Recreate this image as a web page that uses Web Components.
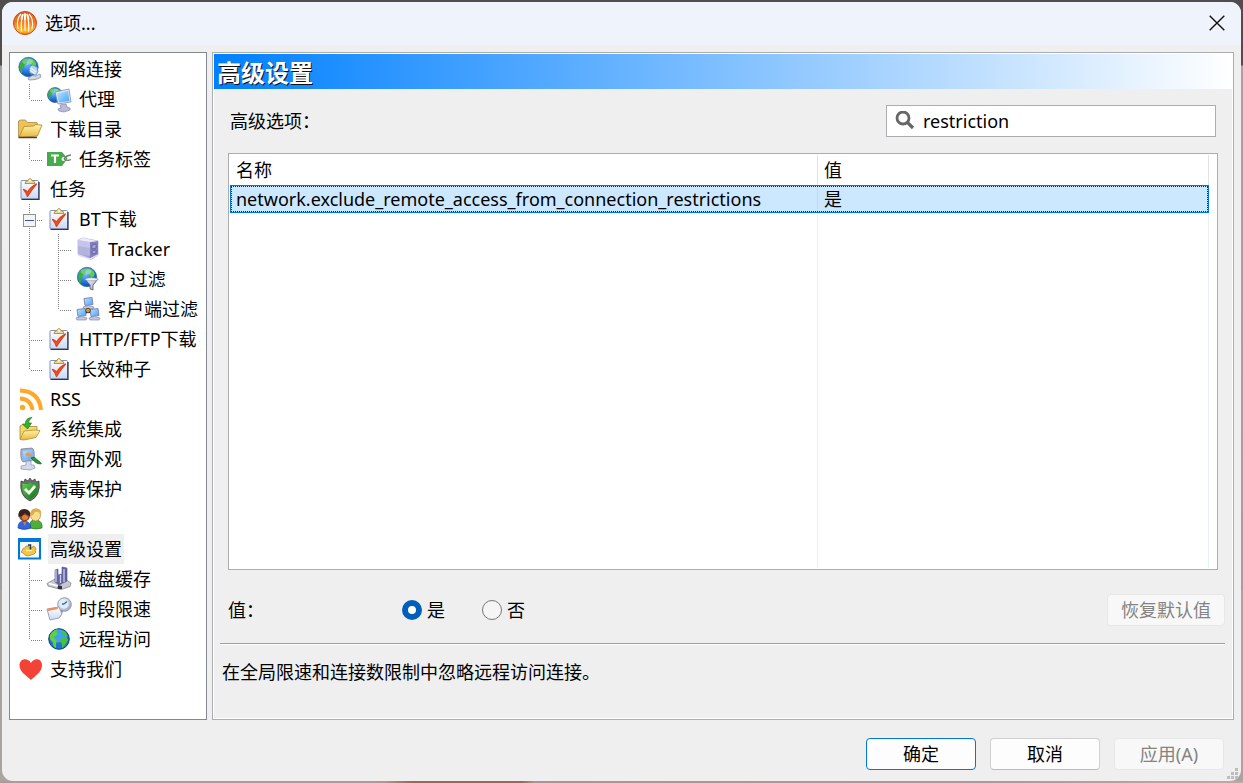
<!DOCTYPE html>
<html lang="zh-CN">
<head>
<meta charset="utf-8">
<title>选项</title>
<style>
  html, body { margin: 0; height: 100%; }
  body {
    box-sizing: border-box;
    padding: 2px;
    font: 18px/30px "Noto Sans", "Noto Sans CJK SC", sans-serif;
    color: #000;
    background:
      linear-gradient(90deg, #9f9f9f 30%, #a99a90 31%, #9a6a55 33%, #9a6a55 42%, #a09a96 43%, #9f9f9f 80%, #b5aea6) bottom / 100% 2px no-repeat,
      linear-gradient(#4f4d4d 65px, #a3a3a3 66px, #a0a0a0 590px, #aaa49e 592px);
  }
</style>
</head>
<body>
<options-window>
  <span slot="title">选项...</span>
  <options-tree slot="tree">
    <tree-item icon="globe-plug">网络连接</tree-item>
    <tree-item icon="globe-monitor" lines="l">代理</tree-item>
    <tree-item icon="folder">下载目录</tree-item>
    <tree-item icon="tag" lines="l">任务标签</tree-item>
    <tree-item icon="task">任务</tree-item>
    <tree-item icon="task" lines="x">BT下载</tree-item>
    <tree-item icon="server" lines="vt">Tracker</tree-item>
    <tree-item icon="globe-filter" lines="vt">IP 过滤</tree-item>
    <tree-item icon="network" lines="vl">客户端过滤</tree-item>
    <tree-item icon="task" lines="t">HTTP/FTP下载</tree-item>
    <tree-item icon="task" lines="l">长效种子</tree-item>
    <tree-item icon="rss">RSS</tree-item>
    <tree-item icon="folder-in">系统集成</tree-item>
    <tree-item icon="appearance">界面外观</tree-item>
    <tree-item icon="shield">病毒保护</tree-item>
    <tree-item icon="people">服务</tree-item>
    <tree-item icon="advanced" selected>高级设置</tree-item>
    <tree-item icon="disk" lines="t">磁盘缓存</tree-item>
    <tree-item icon="schedule" lines="t">时段限速</tree-item>
    <tree-item icon="earth" lines="l">远程访问</tree-item>
    <tree-item icon="heart">支持我们</tree-item>
  </options-tree>
  <options-page slot="page">
    <span slot="heading">高级设置</span>
    <value-row slot="value"></value-row>
    <span slot="description">在全局限速和连接数限制中忽略远程访问连接。</span>
  </options-page>
  <push-button slot="actions" kind="default">确定</push-button>
  <push-button slot="actions">取消</push-button>
  <push-button slot="actions" disabled>应用(A)</push-button>
</options-window>

<script>
const GLOBE = (cx, cy, r) => `
  <circle cx="${cx}" cy="${cy}" r="${r}" fill="url(#sea)" stroke="#1450a0" stroke-width=".6"/>
  <g transform="translate(${cx - r} ${cy - r}) scale(${r / 10})">
    <path d="M1.500 7C3 3 6 1 9 .7l1 2-2 2 1 2-3 1-1 3-2 1 1 3-1 2C1 14 .5 10 1.500 7z" fill="#3cb030"/>
    <path d="M11 1.500q5 0 7 5l-1 3-3 1-1-3-3-1 0-3z" fill="#5fd044"/>
    <path d="M13 13l4-1-2 5-3 2z" fill="#38a834"/>
    <ellipse cx="9" cy="4.500" rx="5.500" ry="3" fill="#fff" opacity=".3"/>
  </g>`;
const DEFS = `<defs>
  <radialGradient id="sea" cx=".4" cy=".3" r=".8"><stop stop-color="#7cc8ff"/><stop offset=".5" stop-color="#2a7ee8"/><stop offset="1" stop-color="#0a3a98"/></radialGradient>
  <linearGradient id="gold" x2="0" y2="1"><stop stop-color="#fff2a8"/><stop offset="1" stop-color="#e8b840"/></linearGradient>
  <linearGradient id="screen" x2="1" y2="1"><stop stop-color="#b8e6ff"/><stop offset="1" stop-color="#4aa2f4"/></linearGradient>
  <linearGradient id="metal" x2="1" y2="1"><stop stop-color="#fafaff"/><stop offset="1" stop-color="#9a9cb4"/></linearGradient>
  <linearGradient id="violet" x2="1" y2="1"><stop stop-color="#dcdcf8"/><stop offset="1" stop-color="#8583c4"/></linearGradient>
  <linearGradient id="leaf" x2="1" y2="1"><stop stop-color="#5ed94a"/><stop offset="1" stop-color="#047010"/></linearGradient>
  <linearGradient id="paper" x2="0" y2="1"><stop stop-color="#fff"/><stop offset="1" stop-color="#c9d9f4"/></linearGradient>
  <linearGradient id="flame" x2="0" y2="1"><stop stop-color="#d9601c"/><stop offset=".45" stop-color="#f4761c"/><stop offset=".85" stop-color="#fbbf2c"/><stop offset="1" stop-color="#f07818"/></linearGradient>
</defs>`;
const MINI_PC = (x, y) => `<g transform="translate(${x} ${y})">
  <path d="M1 1.500l8-1 1 7-8 1z" fill="url(#screen)" stroke="#7f88b8"/>
  <path d="M0 10q5-3 11 0l-1 2H1z" fill="#c5c8e2" stroke="#777c9c" stroke-width=".6"/></g>`;
const ICONS = {
  logo: `<circle cx="12" cy="12" r="11.500" fill="url(#flame)" stroke="#d0481a"/>
    <g fill="none" stroke="#fffaf0" stroke-linecap="round"><path d="M12 3v5" stroke-width="2"/><path d="M12 8v11M10 3.500Q7.500 11 8.500 20M14 3.500Q16.500 11 15.500 20" stroke-width="1.300"/><path d="M7.500 3.500Q3 9 5 17.500M16.500 3.500Q21 9 19 17.500" stroke-width="1.200"/><path d="M9.500 4L8.500 8M14.500 4l1 4" stroke-width="1.800"/></g>`,
  'globe-plug': `${GLOBE(10.500, 10, 9.700)}
    <path d="M11 11l3-3 5 2 1 5-2 3-6-2z" fill="#b4d4f4" stroke="#6d8fbd" stroke-width=".8"/><path d="M13 11l5 4M12 13l5 4" stroke="#e9f5ff" stroke-width="1.300"/>
    <path d="M10 21q5-4 8-2l4-2 1 3-4 2q-4 1-8 1z" fill="#d4d9e6" stroke="#858ea8" stroke-width=".8"/>`,
  'globe-monitor': `${GLOBE(8, 8, 7.500)}
    <path d="M8 5l14-3 2 13-13 2z" fill="#dfe6f6" stroke="#7f8bb6" stroke-width=".8"/><path d="M10 6.500l11-2.500 1.500 10-10.500 1.500z" fill="url(#screen)"/>
    <path d="M13 18l6-1 1 3 3 1v2l-6 2-5-1-1-2 3-1z" fill="#b9bbdb" stroke="#8284ad" stroke-width=".7"/>`,
  folder: `<path d="M.5 20V4l2-1h5l2 2.500h9.500l1 4" fill="#eec258" stroke="#a58a4c" stroke-width=".8"/><path d="M1 20.500L6 9.500l10-.5 1-1.500 7 .5-4.500 11z" fill="url(#gold)" stroke="#b48525" stroke-width=".8" stroke-linejoin="round"/><path d="M.5 20.500H19" stroke="#4a3f2c" stroke-width="1.500"/>`,
  tag: `<path d="M0 5h15l5.500 6.500-5.500 7.500H0z" fill="#45ab4b"/><path d="M4 8.500h8M8 8.500v7.500" stroke="#fff" stroke-width="2.200"/><circle cx="16.500" cy="12" r="2" fill="#fff"/><path d="M17 12q2-3.500 7-4M17 12q3 2.500 7 .5" fill="none" stroke="#777" stroke-width="1.300"/>`,
  task: `<rect x="3" y="3.500" width="17.500" height="18.500" rx="1" fill="url(#paper)" stroke="#7f93bd"/><path d="M3.500 22.300H21V5" fill="none" stroke="#27385e" stroke-width="1.300"/>
    <path d="M7 6.500q0-2.500 3-3Q12-.5 14 3.500q3 .5 3 3z" fill="#f0d98c" stroke="#a3802f" stroke-width=".8"/><circle cx="12" cy="3.500" r="1" fill="#fff"/><path d="M5.500 12.500q2 .5 4 2.500Q13 9.500 18.500 7 14 12 9.500 19.500 8 15 5.500 12.500z" fill="#f0532c" stroke="#e04418" stroke-width="1.300" stroke-linejoin="round"/>`,
  server: `<path d="M2 3l5-2 15 3v14l-6 4L2 17z" fill="url(#violet)" stroke="#a5a4cf" stroke-width=".7"/><path d="M2 3l12 2v14L2 17z" fill="#b3b3e0"/><path d="M2 3l12 2v6L2 9z" fill="#c5c5ea"/><path d="M14 5l8-1v14l-8 5z" fill="#8482bd"/><path d="M2 3l5-2 15 3-8 1z" fill="#ebebfa"/><path d="M16 8l4-1v4l-4 1zM16 14l4-1v3l-4 1z" fill="#a9a8dc" stroke="#55539c" stroke-width=".7"/><path d="M2 18l12 4 8-4" stroke="#dcdcf2" stroke-width="1.500" fill="none"/>`,
  'globe-filter': `${GLOBE(11, 10, 9.700)}<path d="M9 12q6 2 13 0l-5 6v5l-3-1v-4z" fill="url(#metal)" stroke="#555a68" stroke-width=".8"/><ellipse cx="15.500" cy="12.300" rx="6.500" ry="1.500" fill="#eef2fb" stroke="#8c93a8" stroke-width=".5"/>`,
  network: `<path d="M12 9v6M12 14l-5 4M12 14l6 4" stroke="#222a40" stroke-width="2"/>${MINI_PC(7, 0)}${MINI_PC(0, 11)}${MINI_PC(13, 11)}<circle cx="12" cy="13.500" r="2.300" fill="#e89524" stroke="#222" stroke-width=".7"/>`,
  rss: `<g fill="none" stroke="#ffa726" stroke-width="4"><path d="M2 3.500Q21 4 23 23"/><path d="M2 11.500Q13 12 14.500 23" stroke-width="3.800"/></g><circle cx="4.500" cy="20.500" r="2.700" fill="#ffa726"/>`,
  'folder-in': `<path d="M2 22V9l3-1.500h4l2 2h8v5" fill="#f4d868" stroke="#a78639" stroke-width=".8"/><path d="M2 22.500l4-8.500 11-1 5 .5-4 7-12 2.500z" fill="url(#gold)" stroke="#b28b31" stroke-width=".8"/><path d="M14 .5Q7 1 7.500 7H4.500l5 5 4-6h-3q0-3 3.500-5.500z" fill="#39af30" stroke="#197c1c" stroke-width=".7"/>`,
  appearance: `<path d="M3 2l11-1q3 1 2 12l-11 2Q2 13 3 2z" fill="#a3b0d4" stroke="#6d789d" stroke-width=".7"/><path d="M5 4l9-1 1 9-9 1z" fill="url(#screen)"/><path d="M7 8l3-3 4 3-2 2z" fill="#ed984a"/><path d="M8 14h5v4h3l1 3-5 2-9-1v-3l5-1z" fill="#d6d8ec" stroke="#8890ad" stroke-width=".7"/><path d="M13 11l3-1 6 5q2 2 1 2-4 0-6-2z" fill="#26943a" stroke="#126323" stroke-width=".7"/>`,
  shield: `<path d="M3 4l3 1 1-3 3 2 2-3 2 3 3-2 1 3 3-1q2 15-9 20Q1 19 3 4z" fill="#69716f" stroke="#303b37" stroke-width=".7"/><path d="M4.500 6.500q7 2 7.500-1 1 3 7.500 1 1 12-7.500 15.500Q3 18 4.500 6.500z" fill="url(#leaf)"/><path d="M7 12l4 4 6-7" fill="none" stroke="#fff" stroke-width="2.700"/>`,
  people: `<path d="M12 21v-5q1-3 5-3 6 0 7 5v3q-6 2-12 0z" fill="#4fae3b" stroke="#27711c" stroke-width=".7"/><ellipse cx="17.500" cy="8" rx="5" ry="6" fill="#f8dc90" stroke="#b08639" stroke-width=".7"/><path d="M12.500 9q-1-7.500 5.500-7.500T23 8q-2-4-6-3-1 3-4.500 4z" fill="#dcae4c"/><path d="M0 21q0-7 6-7 6 0 7 7-7 3-13 0z" fill="#2f66e4" stroke="#1d439c" stroke-width=".7"/><ellipse cx="6.500" cy="8.500" rx="5.500" ry="6" fill="#8a4a2c"/><path d="M.5 10Q-.5 2 6.500 2q7 1 5.500 7-3 0-5-3-2 3-6.500 4z" fill="#3b211b"/><ellipse cx="7" cy="10.500" rx="3" ry="2.500" fill="#e08040"/><path d="M5 15l2 4 1-4z" fill="#ee7637"/>`,
  advanced: `<rect x="1" y="2" width="21" height="19.500" fill="#f2f8ff" stroke="#0078d7" stroke-width="2"/><path d="M0 3h23" stroke="#0078d7" stroke-width="4"/><path d="M5 11.500l2-.5 1-2h3v2h3l1-2 2 1 1 2-1 2 1 1-2 2-3 1-3 1-3-1-2-2-2-1 1-1z" fill="#f3c740" stroke="#b98929" stroke-width=".8" stroke-linejoin="round"/><path d="M8 13.500h6" stroke="#fbe9a6" stroke-width="1.500"/><path d="M10 8h2.500v4.500" fill="none" stroke="#1e3659" stroke-width="1.500"/>`,
  disk: `<path d="M0 16.500l7-4 11-.5 6 4-1 3.500-9 3L1 19z" fill="#c6c8ce" stroke="#85888f" stroke-width=".8"/><path d="M8 3l3-1v6l4-1V0l5 1v13l-8 4-4-3z" fill="#6563a0" stroke="#565390" stroke-width=".6"/><path d="M9 3v12M13.500 8v8M17 2v13" stroke="#cfceef" stroke-width="1.300"/><path d="M10 18l5 1v3h-4z" fill="#30333a"/><path d="M2 16.500l9 2.500" stroke="#fff" stroke-width="1.300"/>`,
  schedule: `<circle cx="17.500" cy="7.500" r="6.800" fill="url(#metal)" stroke="#9297a5"/><circle cx="17" cy="7" r="4.700" fill="#dcecfb"/><path d="M17 7l3-2.500M17 7h-2" stroke="#336ca6" stroke-width="1.400"/><path d="M15 13l-3 7" stroke="#92959c" stroke-width="3"/><path d="M0 12l12-2 3 7-3 4-9 2z" fill="url(#paper)" stroke="#9aa2b7"/><path d="M0 12l10-2 1 2-10 2z" fill="#f58a55"/>`,
  earth: `<circle cx="12" cy="12" r="10.300" fill="#1c74cc" stroke="#0b3f88"/><ellipse cx="12" cy="9" rx="8" ry="6.500" fill="#3ba4ee"/>
    <path d="M3 8Q6 3 11 2l-2 3 2 1-2 3-3 1 2 2 2 2-1 3 0 4q-3-1-3-5L3 12z" fill="#62d040"/><path d="M14 3q4 0 7 6l-3 0-2-2-2 0zM15 10l4 0 2 3-3 5-3 3 0-4-2-3z" fill="#4cc03a"/>`,
  heart: `<path d="M13 23C9 19 1.500 15 1.500 8.500 1.500 1 10 .5 13 6 16 .5 24 1 24 8.500 24 15 17 19 13 23z" fill="#f44336"/>`
};

const define = (name, html, setup) => customElements.define(name, class extends HTMLElement {
  connectedCallback() {
    if (this.shadowRoot) return;
    const root = this.attachShadow({ mode: 'open' });
    const template = document.createElement('template');
    template.innerHTML = typeof html === 'function' ? html(this) : html;
    root.append(template.content.cloneNode(true));
    if (setup) setup(this, root);
  }
});

define('app-icon', el => `
  <style>
    :host { display: block; flex: none; width: 24px; height: 24px; }
    svg { display: block; width: 100%; height: 100%; overflow: visible; }
  </style>
  <svg viewBox="0 0 24 24" aria-hidden="true">${DEFS}${ICONS[el.getAttribute('name')]}</svg>`);

/* One cell of connector lines: v = through, t = branch, l = last, x = branch with expander */
const guide = kind => {
  const end = kind === 'l' ? 16 : 30;
  const branch = kind === 'v' ? '' : '<path d="M13 16.500h12"/>';
  const box = kind === 'x'
    ? '<rect x="5.500" y="10.500" width="12" height="12" rx="1" fill="#f4f4f4" stroke="#919191" stroke-dasharray="none"/><path d="M7 16.500h9" stroke="#3a53a8" stroke-dasharray="none"/>' : '';
  return `<svg class="guide" viewBox="0 0 29 30" aria-hidden="true"><path d="M11.500 0V${end}"/>${branch}${box}</svg>`;
};

define('tree-item', el => `
  <style>
    :host { display: flex; align-items: center; height: 30px; padding-left: 8px; white-space: nowrap; }
    .guide { flex: none; width: 29px; height: 30px; fill: none; stroke: #808080; stroke-dasharray: 1 1; shape-rendering: crispEdges; }
    .label { margin-left: 6px; padding: 0 2px; }
    :host([selected]) .label { background: #efefef; }
  </style>
  ${[...(el.getAttribute('lines') || '')].map(guide).join('')}
  <app-icon name="${el.getAttribute('icon')}"></app-icon>
  <span class="label"><slot></slot></span>`,
  el => {
    el.setAttribute('role', 'treeitem');
    el.setAttribute('aria-level', (el.getAttribute('lines') || '').length + 1);
    if (el.hasAttribute('selected')) el.setAttribute('aria-selected', 'true');
  });

define('options-tree', `
  <style>
    :host { display: block; box-sizing: border-box; width: 198px; padding-top: 1px; border: 1px solid #828790; background: #fff; overflow: hidden; }
  </style>
  <slot></slot>`, el => el.setAttribute('role', 'tree'));

define('push-button', el => `
  <style>
    :host { display: block; width: 110px; }
    :host([kind=wide]) { width: 118px; }
    button { box-sizing: border-box; width: 100%; height: 32px; padding: 0; border: 1px solid #d0d0d0; border-bottom-color: #bcbcbc; border-radius: 4px; background: #fdfdfd; font: inherit; line-height: 28px; color: #000; white-space: nowrap; }
    :host([kind=default]) button { border-color: #0078d4; }
    button:disabled { color: #838383; background: #f8f8f8; border-color: #e7e7e7; }
  </style>
  <button type="button" ${el.hasAttribute('disabled') ? 'disabled' : ''}><slot></slot></button>`);

define('search-box', `
  <style>
    :host { display: flex; align-items: center; box-sizing: border-box; width: 330px; height: 32px; padding: 0 8px; gap: 8px; border: 1px solid #abadb3; background: #fff; }
    svg { flex: none; width: 20px; height: 20px; }
    input { flex: 1; min-width: 0; padding: 0; border: 0; outline: 0; background: none; font: inherit; color: inherit; }
  </style>
  <svg viewBox="0 0 20 20" aria-hidden="true"><g fill="none" stroke="#666"><circle cx="8" cy="7" r="6" stroke-width="2.800"/><path d="M12 11l6 6" stroke-width="3.200"/></g></svg>
  <input type="text" id="filter" aria-label="搜索" value="restriction">`);

define('settings-list', `
  <style>
    :host { display: block; box-sizing: border-box; border: 1px solid #abadb3; padding: 1px 8px 1px 1px; background: #fff; }
    .view { height: 100%; box-sizing: border-box; background: linear-gradient(#e8f1fb, #e8f1fb) 587px 0 / 1px 100% no-repeat, linear-gradient(#e8f1fb, #e8f1fb) right / 1px 100% no-repeat; }
    table { width: 100%; border-collapse: separate; border-spacing: 0; table-layout: fixed; }
    th, td { box-sizing: border-box; padding: 0 6px; text-align: left; font-weight: 400; white-space: nowrap; }
    th { height: 30px; line-height: 30px; border-right: 1px solid #e2e2e2; }
    td { height: 28px; line-height: 28px; }
    th:first-child { width: 588px; }
    td:first-child { border-right: 1px solid #b9dcfa; }
    tbody tr { position: relative; background: #cce8ff; outline: 1px solid #0078d7; outline-offset: -1px; }
    td:first-child::after { content: ""; position: absolute; inset: 1px; border: 1px dotted #222; }
  </style>
  <div class="view">
    <table>
      <thead><tr><th>名称</th><th>值</th></tr></thead>
      <tbody><tr><td>network.exclude_remote_access_from_connection_restrictions</td><td>是</td></tr></tbody>
    </table>
  </div>`);

define('value-row', `
  <style>
    :host { display: flex; align-items: center; height: 32px; }
    .name { width: 174px; }
    .choice { display: flex; align-items: center; gap: 5px; width: 80px; }
    input { appearance: none; box-sizing: border-box; flex: none; width: 20px; height: 20px; margin: 0; border: 1px solid #767676; border-radius: 50%; background: #f5f5f5; }
    input:checked { border: 6px solid #005fb8; background: #fff; }
    push-button { margin-left: auto; }
  </style>
  <span class="name">值：</span>
  <label class="choice"><input type="radio" name="value" checked>是</label>
  <label class="choice"><input type="radio" name="value">否</label>
  <push-button kind="wide" disabled>恢复默认值</push-button>`);

define('options-page', `
  <style>
    :host { display: flex; flex-direction: column; box-sizing: border-box; border: 1px solid #abadb3; box-shadow: inset 0 0 0 1px #fff; padding: 1px; }
    h1 { margin: 0; padding: 0 3px; height: 35px; line-height: 38px; font-size: 24px; font-weight: 700; color: #fff; text-shadow: 1px 1px 0 #111; background: linear-gradient(90deg, #0080ff, #fff); }
    .top { display: flex; justify-content: space-between; align-items: center; padding: 16px; }
    settings-list { flex: 1; min-height: 0; margin: 0 14px; }
    .value { padding: 24px 7px 17px 14px; }
    hr { margin: 0 7px 0 6px; border: 0; border-top: 1px solid #a0a0a0; border-bottom: 1px solid #fff; }
    p { margin: 0; padding: 12px 8px 31px; }
  </style>
  <h1><slot name="heading"></slot></h1>
  <div class="top"><span>高级选项：</span><search-box></search-box></div>
  <settings-list></settings-list>
  <div class="value"><slot name="value"></slot></div>
  <hr>
  <p><slot name="description"></slot></p>`);

define('options-window', `
  <style>
    :host { position: relative; display: flex; flex-direction: column; box-sizing: border-box; height: calc(100vh - 4px); border-radius: 11px; background: #efefef; overflow: hidden; }
    header { display: flex; align-items: center; gap: 8px; box-sizing: border-box; height: 43px; padding: 0 12px 2px 11px; background: #eff3fb; }
    header button { display: grid; place-items: center; width: 24px; height: 24px; margin-left: auto; padding: 0; border: 0; background: none; }
    main { flex: 1; min-height: 0; display: flex; gap: 5px; padding: 7px 7px 0; }
    ::slotted([slot=page]) { flex: 1; min-width: 0; }
    footer { display: flex; justify-content: flex-end; gap: 14px; padding: 18px 17px 11px; }
    .grip { position: absolute; right: 3px; bottom: 2px; width: 11px; height: 11px; fill: #bdbdbd; }
  </style>
  <header>
    <app-icon name="logo"></app-icon>
    <slot name="title"></slot>
    <button type="button" aria-label="关闭"><svg width="16" height="16" viewBox="0 0 16 16" fill="none" stroke="#111" stroke-width="1.400"><path d="M.7.7l14.600 14.600M15.300.7L.7 15.300"/></svg></button>
  </header>
  <main><slot name="tree"></slot><slot name="page"></slot></main>
  <footer><slot name="actions"></slot></footer>
  <svg class="grip" viewBox="0 0 11 11" aria-hidden="true"><path d="M8 0h3v3H8zM8 4h3v3H8zM4 4h3v3H4zM8 8h3v3H8zM4 8h3v3H4zM0 8h3v3H0z"/></svg>`);
</script>
</body>
</html>
